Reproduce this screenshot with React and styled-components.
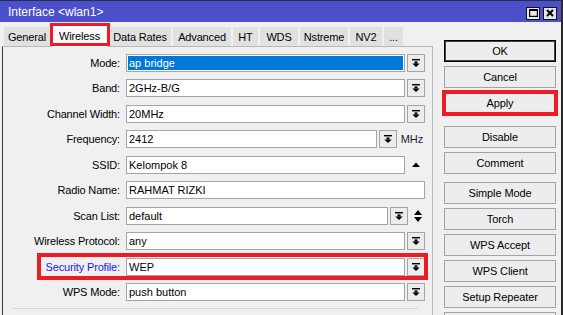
import styled, { createGlobalStyle } from "styled-components";

const Global = createGlobalStyle`
  html, body {
    margin: 0;
    padding: 0;
    background: #f0f0f0;
    overflow: hidden;
  }
  body {
    font-family: "Liberation Sans", Arial, sans-serif;
    font-size: 11px;
    color: #000;
  }
`;

const Window = styled.div`
  width: 563px;
  height: 315px;
  box-sizing: border-box;
  display: flex;
  flex-direction: column;
  background: #f0f0f0;
  border-top: 1px solid #2c2c4a;
  border-right: 2px solid #2b2b2b;
  overflow: hidden;
`;

const TitleBar = styled.div`
  height: 21px;
  flex-shrink: 0;
  display: flex;
  align-items: center;
  justify-content: space-between;
  padding: 0 4px 0 8px;
  background: #4b4fc9;
  color: #fff;
  font-size: 12px;
`;

const WinButtons = styled.div`
  display: flex;
  gap: 3px;
  margin-top: 3px;
`;

const WinButton = styled.div`
  width: 14px;
  height: 13px;
  box-sizing: border-box;
  border: 1px solid #111;
  background: #e6e6e6;
  display: grid;
  place-items: center;
`;

const Content = styled.div`
  flex: 1;
  min-height: 0;
  display: flex;
`;

const LeftPane = styled.div`
  width: 431px;
  margin-left: 2px;
  display: flex;
  flex-direction: column;
`;

const Tabs = styled.div`
  height: 24px;
  display: flex;
  align-items: flex-end;
  gap: 2px;
  padding-left: 2px;
`;

const Tab = styled.div`
  width: ${(p) => p.w}px;
  height: ${(p) => (p.active ? 22 : 19)}px;
  display: flex;
  align-items: center;
  justify-content: center;
  background: ${(p) => (p.active ? "#fbfbfb" : "#e1e1e1")};
  letter-spacing: -0.15px;
  white-space: nowrap;
  position: relative;
  z-index: ${(p) => (p.active ? 1 : 0)};
  margin-bottom: ${(p) => (p.active ? -1 : 0)}px;

  ${(p) =>
    p.active &&
    `
    &::after {
      content: "";
      position: absolute;
      left: -2px;
      right: -3px;
      top: -2px;
      bottom: 1px;
      border: 3px solid #ed1c24;
      pointer-events: none;
    }
  `}
`;

const Panel = styled.div`
  flex: 1;
  border-top: 1px solid #b9b9b9;
  border-right: 1px solid #b9b9b9;
  border-left: 1px solid #3c3c3c;
  padding: 7px 7px 0 0;
  display: flex;
  flex-direction: column;
  gap: 7.44px;
`;

const Row = styled.div`
  height: 18px;
  display: grid;
  grid-template-columns: 117px 299px;
  column-gap: 6px;
  align-items: center;
  position: relative;

  ${(p) =>
    p.highlight &&
    `
    &::after {
      content: "";
      position: absolute;
      left: 34px;
      right: -3px;
      top: -5px;
      bottom: -4px;
      border: 4px solid #ed1c24;
      pointer-events: none;
    }
  `}
`;

const Label = styled.div`
  text-align: right;
  white-space: nowrap;
  letter-spacing: -0.15px;
  color: ${(p) => (p.blue ? "#1a1ae6" : "#000")};
`;

const Field = styled.div`
  display: flex;
  gap: 2px;
  height: 18px;
`;

const Input = styled.div`
  flex: 1;
  min-width: 0;
  height: 18px;
  box-sizing: border-box;
  border: 1px solid #a5a5a5;
  background: ${(p) => (p.selected ? "#0078d7" : "#fff")};
  color: ${(p) => (p.selected ? "#fff" : "#000")};
  box-shadow: ${(p) => (p.selected ? "inset 0 0 0 1px #fff" : "none")};
  padding-left: 2px;
  display: flex;
  align-items: center;
  white-space: nowrap;
  overflow: hidden;
`;

const DropButton = styled.div`
  width: 18px;
  height: 18px;
  flex-shrink: 0;
  box-sizing: border-box;
  border: 1px solid #a5a5a5;
  background: #ececec;
  display: grid;
  place-items: center;
`;

const Suffix = styled.div`
  width: ${(p) => p.w}px;
  flex-shrink: 0;
  display: flex;
  align-items: center;
  justify-content: center;
  color: #1c1c3a;
`;

const Separator = styled.div`
  height: 1px;
  background: #d6d6d6;
  margin: 0 7px 0 10px;
`;

const ButtonColumn = styled.div`
  width: 112px;
  margin-left: 11px;
  padding-top: 18px;
  display: flex;
  flex-direction: column;
  gap: 4px;
`;

const Button = styled.div`
  height: 22px;
  flex-shrink: 0;
  box-sizing: border-box;
  border: 1px solid ${(p) => (p.primary ? "#000" : "#a3a3a3")};
  box-shadow: ${(p) => (p.primary ? "inset 0 0 0 1px #444" : "none")};
  background: #ededed;
  display: flex;
  align-items: center;
  justify-content: center;
  margin-top: ${(p) => p.space || 0}px;
  outline: ${(p) => (p.highlight ? "4px solid #ed1c24" : "none")};
  outline-offset: -2px;
  letter-spacing: -0.1px;
`;

const DropIcon = () => (
  <svg width="8" height="8" viewBox="0 0 8 8">
    <rect x="0" y="0" width="8" height="1.4" fill="#000" />
    <rect x="2.5" y="2.4" width="3" height="2.2" fill="#000" />
    <polygon points="0.3,4.4 7.7,4.4 4,8" fill="#000" />
  </svg>
);

const UpIcon = () => (
  <svg width="8" height="5" viewBox="0 0 8 5">
    <polygon points="0,5 8,5 4,0.5" fill="#000" />
  </svg>
);

const UpDownIcon = () => (
  <svg width="8" height="14" viewBox="0 0 8 14">
    <polygon points="0,6 8,6 4,1" fill="#000" />
    <polygon points="0,8 8,8 4,13" fill="#000" />
  </svg>
);

const tabs = [
  { name: "General", w: 46 },
  { name: "Wireless", w: 55, active: true },
  { name: "Data Rates", w: 62 },
  { name: "Advanced", w: 58 },
  { name: "HT", w: 25 },
  { name: "WDS", w: 38 },
  { name: "Nstreme", w: 48 },
  { name: "NV2", w: 32 },
  { name: "...", w: 19 },
];

const buttons = [
  { id: "ok", text: "OK", primary: true },
  { id: "cancel", text: "Cancel" },
  { id: "apply", text: "Apply", highlight: true },
  { id: "disable", text: "Disable", space: 8 },
  { id: "comment", text: "Comment" },
  { id: "simple", text: "Simple Mode", space: 4 },
  { id: "torch", text: "Torch" },
  { id: "wpsa", text: "WPS Accept" },
  { id: "wpsc", text: "WPS Client" },
  { id: "setup", text: "Setup Repeater" },
  { id: "more", text: "" },
];

export default function App() {
  return (
    <>
      <Global />
      <Window>
        <TitleBar>
          <span>{"Interface <wlan1>"}</span>
          <WinButtons>
            <WinButton>
              <svg width="9" height="8" viewBox="0 0 9 8">
                <rect x="0.6" y="0.6" width="7.8" height="6.8" fill="none" stroke="#000" strokeWidth="1.2" />
                <rect x="0" y="0" width="9" height="2" fill="#000" />
              </svg>
            </WinButton>
            <WinButton>
              <svg width="8" height="8" viewBox="0 0 8 8">
                <path d="M1 1 L7 7 M7 1 L1 7" stroke="#000" strokeWidth="2" />
              </svg>
            </WinButton>
          </WinButtons>
        </TitleBar>
        <Content>
          <LeftPane>
            <Tabs>
              {tabs.map((t) => (
                <Tab key={t.name} w={t.w} active={t.active}>
                  {t.name}
                </Tab>
              ))}
            </Tabs>
            <Panel>
              <Row>
                <Label>Mode:</Label>
                <Field>
                  <Input selected>ap bridge</Input>
                  <DropButton><DropIcon /></DropButton>
                </Field>
              </Row>
              <Row>
                <Label>Band:</Label>
                <Field>
                  <Input>2GHz-B/G</Input>
                  <DropButton><DropIcon /></DropButton>
                </Field>
              </Row>
              <Row>
                <Label>Channel Width:</Label>
                <Field>
                  <Input>20MHz</Input>
                  <DropButton><DropIcon /></DropButton>
                </Field>
              </Row>
              <Row>
                <Label>Frequency:</Label>
                <Field>
                  <Input>2412</Input>
                  <DropButton><DropIcon /></DropButton>
                  <Suffix w={26}>MHz</Suffix>
                </Field>
              </Row>
              <Row>
                <Label>SSID:</Label>
                <Field>
                  <Input>Kelompok 8</Input>
                  <Suffix w={18}><UpIcon /></Suffix>
                </Field>
              </Row>
              <Row>
                <Label>Radio Name:</Label>
                <Field>
                  <Input>RAHMAT RIZKI</Input>
                </Field>
              </Row>
              <Row>
                <Label>Scan List:</Label>
                <Field>
                  <Input>default</Input>
                  <DropButton><DropIcon /></DropButton>
                  <Suffix w={15}><UpDownIcon /></Suffix>
                </Field>
              </Row>
              <Row>
                <Label>Wireless Protocol:</Label>
                <Field>
                  <Input>any</Input>
                  <DropButton><DropIcon /></DropButton>
                </Field>
              </Row>
              <Row highlight>
                <Label blue>Security Profile:</Label>
                <Field>
                  <Input>WEP</Input>
                  <DropButton><DropIcon /></DropButton>
                </Field>
              </Row>
              <Row>
                <Label>WPS Mode:</Label>
                <Field>
                  <Input>push button</Input>
                  <DropButton><DropIcon /></DropButton>
                </Field>
              </Row>
              <Separator />
            </Panel>
          </LeftPane>
          <ButtonColumn>
            {buttons.map((b) => (
              <Button key={b.id} primary={b.primary} highlight={b.highlight} space={b.space}>
                {b.text}
              </Button>
            ))}
          </ButtonColumn>
        </Content>
      </Window>
    </>
  );
}
